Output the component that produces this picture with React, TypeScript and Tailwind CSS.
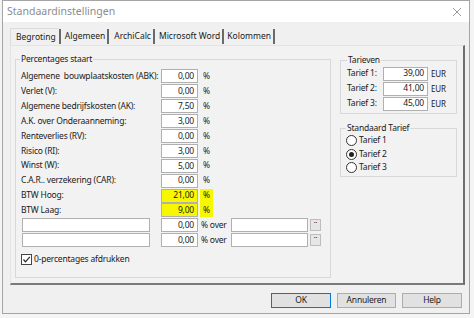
import React from "react";

const font = { fontFamily: '"Noto Sans", "Open Sans", sans-serif' };

function Inp({ v, w, hl }: { v: string; w: string; hl?: boolean }) {
  return (
    <div
      className={`${w} h-[14px] border border-[#b0b0b0] flex items-center justify-end pr-[3px] leading-none ${hl ? "bg-[#f7f700]" : "bg-white"}`}
    >
      {v}
    </div>
  );
}

const rows: [string, string, boolean?][] = [
  ["Algemene  bouwplaatskosten (ABK):", "0,00"],
  ["Verlet (V):", "0,00"],
  ["Algemene bedrijfskosten (AK):", "7,50"],
  ["A.K. over Onderaanneming:", "3,00"],
  ["Renteverlies (RV):", "0,00"],
  ["Risico (RI):", "3,00"],
  ["Winst (W):", "5,00"],
  ["C.A.R.. verzekering (CAR):", "0,00"],
  ["BTW Hoog:", "21,00", true],
  ["BTW Laag:", "9,00", true],
];

function Radio({ label, on }: { label: string; on?: boolean }) {
  return (
    <div className="h-[13.5px] flex items-center gap-[2px]">
      <div className="w-[11px] h-[11px] rounded-full border border-[#333] bg-white flex items-center justify-center">
        {on && <div className="w-[5px] h-[5px] rounded-full bg-[#222]" />}
      </div>
      <span>{label}</span>
    </div>
  );
}

function Sep() {
  return <div className="w-[2px] my-[1px] bg-[#6a6a6a]" />;
}

export default function App() {
  return (
    <div
      className="w-[474px] h-[318px] bg-[#f4f4f4] pl-[2px] text-[8.5px] tracking-[-0.2px] text-[#1a1a1a] whitespace-nowrap"
      style={font}
    >
      <div className="w-[468px] h-[314px] border border-[#a5a5a5] bg-[#f0f0f0] flex flex-col">
        {/* title bar */}
        <div className="h-[21px] bg-white flex items-center justify-between pl-[4px] pr-[7px] shrink-0">
          <span className="text-[10.5px] tracking-normal text-[#8c8c8c]">Standaardinstellingen</span>
          <svg width="10" height="10" viewBox="0 0 10 10">
            <path d="M1 1 L9 9 M9 1 L1 9" stroke="#9a9a9a" strokeWidth="1" />
          </svg>
        </div>
        {/* body */}
        <div className="pl-[7px] pt-[6px]">
          <div className="flex h-[17px] items-stretch tracking-normal">
            <div className="border-l border-t border-[#dcdcdc] flex items-center pl-[5px] pr-[3px]">Begroting</div>
            <Sep />
            <div className="flex items-center pl-[4px] pr-[2px]">Algemeen</div>
            <Sep />
            <div className="flex items-center pl-[5px] pr-[2px]">ArchiCalc</div>
            <Sep />
            <div className="flex items-center pl-[4px] pr-[2px]">Microsoft Word</div>
            <Sep />
            <div className="flex items-center pl-[3px] pr-[2px]">Kolommen</div>
            <Sep />
          </div>
          {/* panel */}
          <div className="w-[455px] h-[240px] border-l border-t border-[#e4e4e4] border-r-2 border-b-2 border-r-[#6e6e6e] border-b-[#7a7a7a] bg-[#f2f2f2] flex pl-[4px] pt-[7px]">
            {/* percentages */}
            <fieldset className="w-[316px] h-[225px] border border-[#d8d8d8] px-[5px]">
              <legend className="px-[1px] ml-[-1px] leading-[12px]">Percentages staart</legend>
              <div className="mt-[4px] flex flex-col">
                {rows.map(([l, v, hl]) => (
                  <div key={l} className="h-[14.9px] flex items-center">
                    <span className="w-[140px] whitespace-pre">{l}</span>
                    <Inp v={v} w="w-[37px]" hl={hl} />
                    <span className={`ml-[2px] px-[3px] h-[14px] flex items-center ${hl ? "bg-[#f7f700]" : ""}`}>%</span>
                  </div>
                ))}
                {[0, 1].map((i) => (
                  <div key={i} className="h-[14.9px] flex items-center">
                    <div className="w-[128px] h-[14px] ml-[1px] border border-[#b0b0b0] bg-white" />
                    <div className="w-[11px]" />
                    <Inp v="0,00" w="w-[37px]" />
                    <span className="ml-[3px] w-[30px]">% over</span>
                    <div className="w-[77px] h-[14px] border border-[#b0b0b0] bg-white" />
                    <div className="ml-[2px] w-[11px] h-[12px] border border-[#bdbdbd] bg-[#e6e6e6] flex items-start justify-center text-[7px] leading-[6px]">
                      ··
                    </div>
                  </div>
                ))}
                <div className="mt-[5px] flex items-center gap-[2px]">
                  <div className="w-[11px] h-[11px] border border-[#444] bg-white flex items-center justify-center">
                    <svg width="9" height="9" viewBox="0 0 9 9">
                      <path d="M1.5 4.5 L3.5 6.8 L7.8 1.8" stroke="#222" strokeWidth="1.2" fill="none" />
                    </svg>
                  </div>
                  <span>0-percentages afdrukken</span>
                </div>
              </div>
            </fieldset>
            {/* right column */}
            <div className="ml-[9px] w-[117px] flex flex-col">
              <fieldset className="h-[60px] border border-[#d8d8d8] pl-[6px] mt-[1px]">
                <legend className="px-[1px] leading-[12px]">Tarieven</legend>
                <div className="flex flex-col">
                  {[
                    ["Tarief 1:", "39,00"],
                    ["Tarief 2:", "41,00"],
                    ["Tarief 3:", "45,00"],
                  ].map(([l, v]) => (
                    <div key={l} className="h-[15px] flex items-center">
                      <span className="w-[36px]">{l}</span>
                      <Inp v={v} w="w-[45px]" />
                      <span className="ml-[3px] text-[8px]">EUR</span>
                    </div>
                  ))}
                </div>
              </fieldset>
              <fieldset className="mt-[8px] h-[55px] border border-[#d8d8d8] pl-[5px]">
                <legend className="px-[1px] leading-[12px]">Standaard Tarief</legend>
                <div className="flex flex-col">
                  <Radio label="Tarief 1" />
                  <Radio label="Tarief 2" on />
                  <Radio label="Tarief 3" />
                </div>
              </fieldset>
            </div>
          </div>
          {/* buttons */}
          <div className="mt-[8px] flex pl-[261px] gap-[6px]">
            <div className="w-[60px] h-[15px] border border-[#0078d7] bg-[#e1e1e1] flex items-center justify-center">OK</div>
            <div className="w-[59px] h-[15px] border border-[#adadad] bg-[#e1e1e1] flex items-center justify-center">Annuleren</div>
            <div className="w-[60px] h-[15px] border border-[#adadad] bg-[#e1e1e1] flex items-center justify-center">Help</div>
          </div>
        </div>
      </div>
    </div>
  );
}
